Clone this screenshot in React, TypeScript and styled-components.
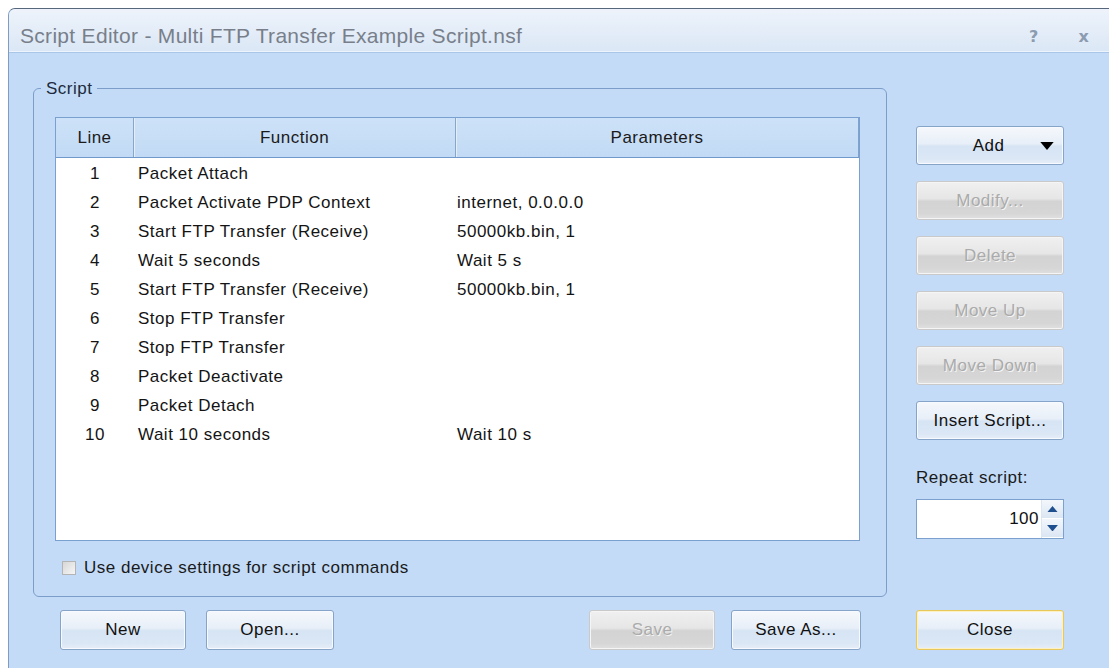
import React from "react";
import styled, { createGlobalStyle, css } from "styled-components";

// Global

const GlobalStyle = createGlobalStyle`
  html, body {
    margin: 0;
    padding: 0;
    background: #ffffff;
  }
  body {
    font-family: "Liberation Sans", Arial, sans-serif;
    font-size: 17px;
    letter-spacing: 0.5px;
    color: #161616;
  }
`;

// Data

type ScriptLine = { fn: string; params: string };

const lines: ScriptLine[] = [
  { fn: "Packet Attach", params: "" },
  { fn: "Packet Activate PDP Context", params: "internet, 0.0.0.0" },
  { fn: "Start FTP Transfer (Receive)", params: "50000kb.bin, 1" },
  { fn: "Wait 5 seconds", params: "Wait 5 s" },
  { fn: "Start FTP Transfer (Receive)", params: "50000kb.bin, 1" },
  { fn: "Stop FTP Transfer", params: "" },
  { fn: "Stop FTP Transfer", params: "" },
  { fn: "Packet Deactivate", params: "" },
  { fn: "Packet Detach", params: "" },
  { fn: "Wait 10 seconds", params: "Wait 10 s" },
];

// Window frame

const Page = styled.div`
  box-sizing: border-box;
  height: 668px;
  padding: 8px 0 0 8px;
  overflow: hidden;
`;

const Window = styled.div`
  height: 660px;
  display: flex;
  flex-direction: column;
  background: #c3dbf7;
  border-top: 1px solid #56677d;
  border-left: 1px solid #7f9cc4;
  border-top-left-radius: 7px;
  overflow: hidden;
`;

const TitleBar = styled.div`
  box-sizing: border-box;
  height: 44px;
  flex: none;
  display: flex;
  align-items: center;
  padding: 11px 0 0 11px;
  background: linear-gradient(#eef3fb 0%, #e4edf8 50%, #dbe7f6 100%);
  border-bottom: 1px solid #a9c5e8;
  box-shadow: inset 0 -1px 0 #eef4fc;
`;

const Title = styled.div`
  flex: 1;
  font-size: 21px;
  letter-spacing: 0.3px;
  color: #787f8a;
`;

const TitleButton = styled.span`
  width: 50px;
  text-align: center;
  font-family: "DejaVu Sans", sans-serif;
  font-weight: bold;
  font-size: 16px;
  color: #8c9bb0;
`;

const Body = styled.div`
  display: grid;
  grid-template-columns: 854px 148px;
  grid-template-rows: auto 40px;
  column-gap: 29px;
  row-gap: 13px;
  padding: 26px 0 0 24px;
`;

// Group box

const Group = styled.fieldset`
  box-sizing: border-box;
  margin: 0;
  padding: 0 26px 20px 21px;
  border: 1px solid #7c9dca;
  border-radius: 6px;
  min-width: 0;
`;

const Legend = styled.legend`
  margin-left: -14px;
  padding: 0 5px;
  line-height: 19px;
  color: #1d2a3c;
`;

// List view

const List = styled.div`
  box-sizing: border-box;
  margin-top: 19px;
  height: 424px;
  background: #ffffff;
  border: 1px solid #7aa0cf;
`;

const Columns = css`
  display: grid;
  grid-template-columns: 78px 322px 1fr;
`;

const HeaderRow = styled.div`
  ${Columns}
  height: 39px;
  background: linear-gradient(#cde2f8, #c2daf5);
  border-bottom: 1px solid #6f98cb;
`;

const HeaderCell = styled.div<{ $last?: boolean }>`
  display: flex;
  align-items: center;
  justify-content: center;
  color: #1a1a1a;
  border-right: ${(p) => (p.$last ? "1px solid #7fa3cf" : "1px solid #8aa6c6")};
  box-shadow: ${(p) => (p.$last ? "none" : "1px 0 0 #e4eefa")};
`;

const Rows = styled.div`
  padding-top: 1px;
`;

const Row = styled.div`
  ${Columns}
  height: 29px;
  align-items: center;
`;

const Cell = styled.div<{ $align?: "center" | "left"; $indent?: number }>`
  text-align: ${(p) => p.$align ?? "left"};
  padding-left: ${(p) => p.$indent ?? 0}px;
  white-space: nowrap;
  color: #141414;
`;

// Checkbox

const CheckRow = styled.label`
  display: flex;
  align-items: center;
  gap: 8px;
  margin: 19px 0 0 7px;
  height: 16px;
  color: #1a1a1a;
`;

const CheckBox = styled.span`
  box-sizing: border-box;
  width: 14px;
  height: 14px;
  flex: none;
  border: 1px solid #b4b4b4;
  background: linear-gradient(135deg, #d7d7d7, #f6f6f6);
`;

// Buttons

const Button = styled.button<{ $disabled?: boolean; $default?: boolean }>`
  box-sizing: border-box;
  height: 39px;
  padding: 0 6px;
  font-family: "Liberation Sans", Arial, sans-serif;
  font-size: 17px;
  letter-spacing: 0.5px;
  color: #111111;
  border-radius: 3px;
  border: 1px solid #86a3c8;
  background: linear-gradient(
    #f5f8fc 0%,
    #e8eff8 45%,
    #d6e4f4 52%,
    #dbe7f5 85%,
    #e6eef8 100%
  );
  box-shadow: inset 0 0 0 1px #f7fafe;
  cursor: default;

  ${(p) =>
    p.$disabled &&
    css`
      color: #ababab;
      text-shadow: 1px 1px 0 #f4f4f4;
      border-color: #c9c9c9;
      background: linear-gradient(
        #f0f0f0 0%,
        #e6e6e6 45%,
        #d3d3d3 52%,
        #d6d6d6 85%,
        #e0e0e0 100%
      );
      box-shadow: inset 0 0 0 1px #f5f5f5;
    `}

  ${(p) =>
    p.$default &&
    css`
      border-color: #e9c85a;
      box-shadow: inset 0 0 0 1px #fbf1c4;
    `}
`;

const SideColumn = styled.div`
  display: flex;
  flex-direction: column;
  gap: 16px;
  padding-top: 47px;
`;

const SideButton = styled(Button)`
  width: 148px;
`;

const DropButton = styled(SideButton)`
  display: flex;
  align-items: center;
  padding: 0 9px 0 20px;
`;

const DropLabel = styled.span`
  flex: 1;
  text-align: center;
`;

const RepeatBlock = styled.div`
  display: flex;
  flex-direction: column;
  gap: 12px;
  margin-top: 13px;
`;

const RepeatLabel = styled.div`
  line-height: 18px;
  color: #1a1a1a;
`;

const Spinner = styled.div`
  box-sizing: border-box;
  width: 148px;
  height: 40px;
  display: flex;
  background: #ffffff;
  border: 1px solid #7da1cf;
`;

const SpinValue = styled.div`
  flex: 1;
  display: flex;
  align-items: center;
  justify-content: flex-end;
  padding-right: 2px;
  color: #111111;
`;

const SpinButtons = styled.div`
  width: 21px;
  display: flex;
  flex-direction: column;
  border-left: 1px solid #dce6f2;
`;

const SpinHalf = styled.div`
  flex: 1;
  display: flex;
  align-items: center;
  justify-content: center;
  background: linear-gradient(#f3f7fc, #dbe6f3);
  border-bottom: 1px solid #ffffff;
`;

const BottomRow = styled.div`
  display: flex;
  justify-content: space-between;
  padding: 0 26px 0 27px;
`;

const ButtonGroup = styled.div<{ $gap: number }>`
  display: flex;
  gap: ${(p) => p.$gap}px;
`;

const WideButton = styled(Button)<{ $w: number }>`
  width: ${(p) => p.$w}px;
  height: 40px;
`;

// Small glyphs

const Triangle = ({ up, color, w }: { up?: boolean; color: string; w: number }) => (
  <svg width={w} height={w / 2 + 1} viewBox="0 0 10 6">
    <path d={up ? "M0 6 L5 0 L10 6 Z" : "M0 0 L10 0 L5 6 Z"} fill={color} />
  </svg>
);

// App

export default function App() {
  return (
    <Page>
      <GlobalStyle />
      <Window>
        <TitleBar>
          <Title>Script Editor - Multi FTP Transfer Example Script.nsf</Title>
          <TitleButton>?</TitleButton>
          <TitleButton>x</TitleButton>
        </TitleBar>

        <Body>
          <Group>
            <Legend>Script</Legend>
            <List>
              <HeaderRow>
                <HeaderCell>Line</HeaderCell>
                <HeaderCell>Function</HeaderCell>
                <HeaderCell $last>Parameters</HeaderCell>
              </HeaderRow>
              <Rows>
                {lines.map((l, i) => (
                  <Row key={i}>
                    <Cell $align="center">{i + 1}</Cell>
                    <Cell $indent={4}>{l.fn}</Cell>
                    <Cell $indent={1}>{l.params}</Cell>
                  </Row>
                ))}
              </Rows>
            </List>
            <CheckRow>
              <CheckBox />
              Use device settings for script commands
            </CheckRow>
          </Group>

          <SideColumn>
            <DropButton>
              <DropLabel>Add</DropLabel>
              <Triangle color="#000000" w={14} />
            </DropButton>
            <SideButton $disabled>Modify...</SideButton>
            <SideButton $disabled>Delete</SideButton>
            <SideButton $disabled>Move Up</SideButton>
            <SideButton $disabled>Move Down</SideButton>
            <SideButton>Insert Script...</SideButton>
            <RepeatBlock>
              <RepeatLabel>Repeat script:</RepeatLabel>
              <Spinner>
                <SpinValue>100</SpinValue>
                <SpinButtons>
                  <SpinHalf>
                    <Triangle up color="#1f4f8e" w={11} />
                  </SpinHalf>
                  <SpinHalf>
                    <Triangle color="#1f4f8e" w={11} />
                  </SpinHalf>
                </SpinButtons>
              </Spinner>
            </RepeatBlock>
          </SideColumn>

          <BottomRow>
            <ButtonGroup $gap={20}>
              <WideButton $w={126}>New</WideButton>
              <WideButton $w={128}>Open...</WideButton>
            </ButtonGroup>
            <ButtonGroup $gap={16}>
              <WideButton $w={126} $disabled>
                Save
              </WideButton>
              <WideButton $w={130}>Save As...</WideButton>
            </ButtonGroup>
          </BottomRow>
          <WideButton $w={148} $default>
            Close
          </WideButton>
        </Body>
      </Window>
    </Page>
  );
}
